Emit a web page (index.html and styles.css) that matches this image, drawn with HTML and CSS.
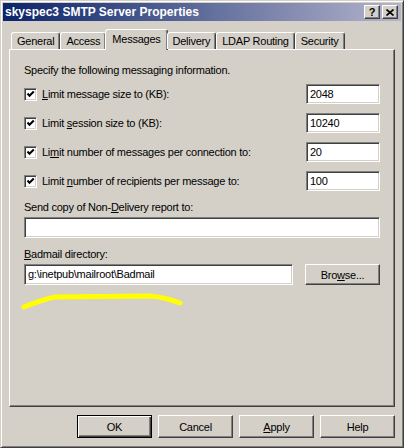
FILE: index.html
```html
<!DOCTYPE html>
<html lang="en">
<head>
  <meta charset="UTF-8" />
  <title>skyspec3 SMTP Server Properties</title>
  <link rel="stylesheet" href="styles.css">
</head>
<body>

  <div class="window">

    <!-- Title bar -->
    <div class="titlebar">
      <span class="title">skyspec3 SMTP Server Properties</span>
      <div class="title-buttons">
        <div class="tbtn help">?</div>
        <div class="tbtn">
          <svg width="8" height="7" viewBox="0 0 8 7"><path d="M0.5 0.5 L7.5 6.5 M7.5 0.5 L0.5 6.5" stroke="#000" stroke-width="1.6"/></svg>
        </div>
      </div>
    </div>

    <!-- Tabs -->
    <div class="tabs">
      <div class="tab">General</div>
      <div class="tab">Access</div>
      <div class="tab active">Messages</div>
      <div class="tab">Delivery</div>
      <div class="tab">LDAP Routing</div>
      <div class="tab">Security</div>
    </div>

    <!-- Messages page -->
    <div class="panel">
      <p class="intro">Specify the following messaging information.</p>

      <div class="limit-row">
        <span class="check"><svg width="9" height="9" viewBox="0 0 9 9"><path d="M1.5 3.5 L3.5 5.8 L7.8 1.5" fill="none" stroke="#000" stroke-width="2"/></svg></span>
        <span class="label"><u>L</u>imit message size to (KB):</span>
        <div class="field small">2048</div>
      </div>
      <div class="limit-row">
        <span class="check"><svg width="9" height="9" viewBox="0 0 9 9"><path d="M1.5 3.5 L3.5 5.8 L7.8 1.5" fill="none" stroke="#000" stroke-width="2"/></svg></span>
        <span class="label">Limit <u>s</u>ession size to (KB):</span>
        <div class="field small">10240</div>
      </div>
      <div class="limit-row">
        <span class="check"><svg width="9" height="9" viewBox="0 0 9 9"><path d="M1.5 3.5 L3.5 5.8 L7.8 1.5" fill="none" stroke="#000" stroke-width="2"/></svg></span>
        <span class="label">Li<u>m</u>it number of messages per connection to:</span>
        <div class="field small">20</div>
      </div>
      <div class="limit-row">
        <span class="check"><svg width="9" height="9" viewBox="0 0 9 9"><path d="M1.5 3.5 L3.5 5.8 L7.8 1.5" fill="none" stroke="#000" stroke-width="2"/></svg></span>
        <span class="label">Limit <u>n</u>umber of recipients per message to:</span>
        <div class="field small">100</div>
      </div>

      <div class="caption first">Send copy of Non-<u>D</u>elivery report to:</div>
      <div class="field"></div>

      <div class="caption"><u>B</u>admail directory:</div>
      <div class="dir-row">
        <div class="field grow">g:\inetpub\mailroot\Badmail</div>
        <div class="btn browse">Bro<u>w</u>se...</div>
      </div>

      <svg class="scribble" width="170" height="22" viewBox="0 0 170 22">
        <path d="M5 17 C15 13 25 9 36 7 L131 6 C143 7 153 10 161 13" fill="none" stroke="#ffff00" stroke-width="5" stroke-linecap="round" stroke-linejoin="round"/>
      </svg>
    </div>

    <!-- Dialog buttons -->
    <div class="actions">
      <div class="btn default">OK</div>
      <div class="btn">Cancel</div>
      <div class="btn"><u>A</u>pply</div>
      <div class="btn">Help</div>
    </div>

  </div>

</body>
</html>
```

FILE: styles.css
```css
* {
  box-sizing: border-box;
  margin: 0;
  padding: 0;
}

body {
  background: #d4d0c8;
  color: #000;
  font-family: "Liberation Sans", Arial, sans-serif;
  font-size: 11px;
  letter-spacing: -0.25px;
}

u {
  text-decoration: underline;
  text-underline-offset: 1px;
}

.window {
  width: 404px;
  height: 448px;
  padding: 2px;
  background: #d4d0c8;
  border: 1px solid;
  border-color: #d4d0c8 #404040 #404040 #d4d0c8;
  box-shadow: inset 1px 1px #fff, inset -1px -1px #808080;
}

/* Title bar */
.titlebar {
  height: 18px;
  display: flex;
  align-items: center;
  justify-content: space-between;
  padding: 0 3px 0 2px;
  background: linear-gradient(to right, #0a246a, #b4b4cc);
}

.title {
  color: #fff;
  font-weight: bold;
  font-size: 12px;
  letter-spacing: 0;
}

.title-buttons {
  display: flex;
  gap: 2px;
}

.tbtn {
  width: 16px;
  height: 14px;
  display: flex;
  align-items: center;
  justify-content: center;
  background: #d4d0c8;
  border: 1px solid;
  border-color: #fff #404040 #404040 #fff;
  box-shadow: inset -1px -1px #808080;
  font-weight: bold;
  font-size: 11px;
  letter-spacing: 0;
  line-height: 1;
}

/* Tabs */
.tabs {
  display: flex;
  align-items: flex-end;
  height: 20px;
  margin-top: 8px;
  padding-left: 8px;
  position: relative;
  z-index: 1;
}

.tab {
  height: 17px;
  padding: 0 5px;
  line-height: 16px;
  white-space: nowrap;
  border: 1px solid;
  border-bottom: none;
  border-color: #fff #404040 transparent #fff;
  border-radius: 3px 3px 0 0;
  box-shadow: inset -1px 0 #808080;
}

.tab.active {
  height: 21px;
  margin: 0 -1px -1px -1px;
  padding: 0 6px;
  line-height: 18px;
  background: #d4d0c8;
}

/* Panel */
.panel {
  height: 358px;
  margin: 0 6px;
  padding: 13px 14px 0 14px;
  border: 1px solid;
  border-color: #fff #404040 #404040 #fff;
  box-shadow: inset -1px -1px #808080;
}

.intro {
  line-height: 14px;
  margin-bottom: 7px;
}

.limit-row {
  display: flex;
  align-items: center;
  height: 20px;
  margin-bottom: 9px;
}

.check {
  width: 13px;
  height: 13px;
  display: flex;
  align-items: center;
  justify-content: center;
  background: #fff;
  border: 1px solid;
  border-color: #808080 #fff #fff #808080;
  box-shadow: inset 1px 1px #404040, inset -1px -1px #d4d0c8;
  margin-right: 5px;
}

.label {
  flex: 1;
}

.field {
  height: 21px;
  padding: 0 3px;
  line-height: 19px;
  background: #fff;
  border: 1px solid;
  border-color: #808080 #fff #fff #808080;
  box-shadow: inset 1px 1px #404040, inset -1px -1px #d4d0c8;
  white-space: nowrap;
}

.field.small {
  width: 74px;
  height: 20px;
  line-height: 18px;
}

.caption {
  line-height: 14px;
  margin: 9px 0 3px;
}

.caption.first {
  margin-top: 6px;
}

.dir-row {
  display: flex;
  gap: 12px;
}

.field.grow {
  flex: 1;
}

.btn {
  width: 75px;
  height: 23px;
  display: flex;
  align-items: center;
  justify-content: center;
  background: #d4d0c8;
  border: 1px solid;
  border-color: #fff #404040 #404040 #fff;
  box-shadow: inset -1px -1px #808080;
}

.btn.browse {
  height: 21px;
}

.btn.default {
  border-color: #000;
  box-shadow: inset 1px 1px #fff, inset -1px -1px #404040, inset -2px -2px #808080;
}

.scribble {
  display: block;
  margin: 5px 0 0 -5px;
}

/* Dialog buttons */
.actions {
  display: flex;
  justify-content: flex-end;
  gap: 6px;
  margin: 8px 6px 0 0;
}
```
